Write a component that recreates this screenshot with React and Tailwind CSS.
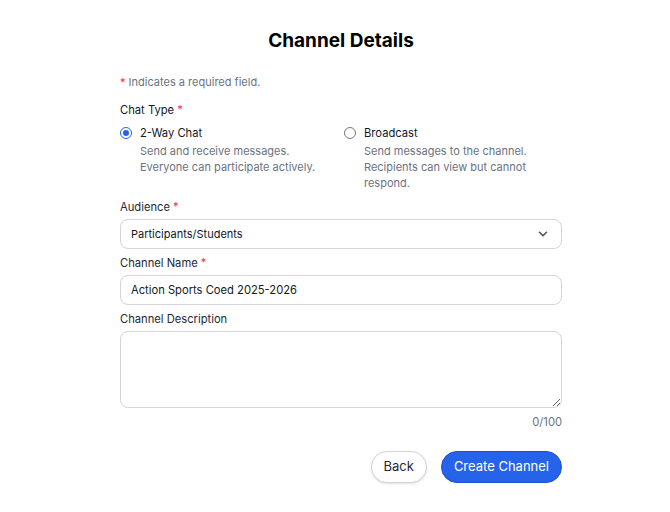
import React, { useState } from 'react';
import { ChevronDown } from 'lucide-react';

function Req() {
    return <span className="text-red-500">*</span>;
}

function Radio({ checked, title, lines, onClick }) {
    return (
        <div className="flex gap-[8px] cursor-pointer" onClick={onClick}>
            <div className="pt-[3px]">
                <div
                    className={`w-[12px] h-[12px] rounded-full border flex items-center justify-center ${checked ? 'border-[#2563eb]' : 'border-[#767676]'}`}
                >
                    {checked && <div className="w-[6px] h-[6px] rounded-full bg-[#2563eb]" />}
                </div>
            </div>
            <div>
                <div className="text-[11.2px] leading-[18px] text-[#111827]">{title}</div>
                <div className="mt-[1px] text-[11px] leading-[16px] text-[#6b7280]">
                    {lines.map((l, i) => <div key={i}>{l}</div>)}
                </div>
            </div>
        </div>
    );
}

export default function App() {
    const [type, setType] = useState('2way');
    const [name, setName] = useState('Action Sports Coed 2025-2026');
    const [desc, setDesc] = useState('');

    return (
        <div className="min-h-[512px] bg-white flex justify-center pl-[12px]" style={{ fontFamily: 'Inter, "Noto Sans", sans-serif' }}>
            <div className="w-[442px] pt-[28px]">
                <h1 className="text-center text-[19px] leading-[26px] font-bold text-black">Channel Details</h1>

                <p className="mt-[20px] text-[11px] leading-[16px] text-[#6b7280]">
                    <Req /> Indicates a required field.
                </p>

                <div className="mt-[12px] text-[11.2px] leading-[16px] text-[#111827]">
                    Chat Type <Req />
                </div>

                <div className="mt-[6px] flex">
                    <div className="w-[224px]">
                        <Radio
                            checked={type === '2way'}
                            onClick={() => setType('2way')}
                            title="2-Way Chat"
                            lines={['Send and receive messages.', 'Everyone can participate actively.']}
                        />
                    </div>
                    <div className="flex-1">
                        <Radio
                            checked={type === 'broadcast'}
                            onClick={() => setType('broadcast')}
                            title="Broadcast"
                            lines={['Send messages to the channel.', 'Recipients can view but cannot', 'respond.']}
                        />
                    </div>
                </div>

                <div className="mt-[8px] text-[11.2px] leading-[16px] text-[#1f2937]">
                    Audience <Req />
                </div>
                <div className="mt-[4px] h-[30px] rounded-lg border border-[#d1d5db] flex items-center justify-between pl-[10px] pr-[11px] text-[11px] text-[#111827]">
                    <span>Participants/Students</span>
                    <ChevronDown size={14} strokeWidth={2.75} className="text-[#4b5563]" />
                </div>

                <div className="mt-[6px] text-[11.2px] leading-[16px] text-[#1f2937]">
                    Channel Name <Req />
                </div>
                <input
                    value={name}
                    onChange={(e) => setName(e.target.value)}
                    className="mt-[4px] w-full h-[30px] rounded-lg border border-[#d1d5db] px-[10px] text-[11.2px] text-[#111827] focus:outline-none"
                />

                <div className="mt-[6px] text-[11.2px] leading-[16px] text-[#1f2937]">
                    Channel Description
                </div>
                <textarea
                    value={desc}
                    maxLength={100}
                    onChange={(e) => setDesc(e.target.value)}
                    className="mt-[4px] block w-full h-[77px] rounded-lg border border-[#d1d5db] px-[10px] py-[6px] text-[11.2px] focus:outline-none"
                />
                <div className="mt-[6px] text-right text-[11.2px] leading-[16px] text-[#6b7280]">{desc.length}/100</div>

                <div className="mt-[21px] flex justify-end gap-[14px]">
                    <button className="h-[32px] px-[12px] rounded-full border border-[#d1d5db] bg-white text-[13px] text-[#1f2937] shadow-sm">
                        Back
                    </button>
                    <button className="h-[32px] px-[12px] rounded-full border border-[#1d4ed8] bg-[#2563eb] text-[13px] text-white">
                        Create Channel
                    </button>
                </div>
            </div>
        </div>
    );
}
